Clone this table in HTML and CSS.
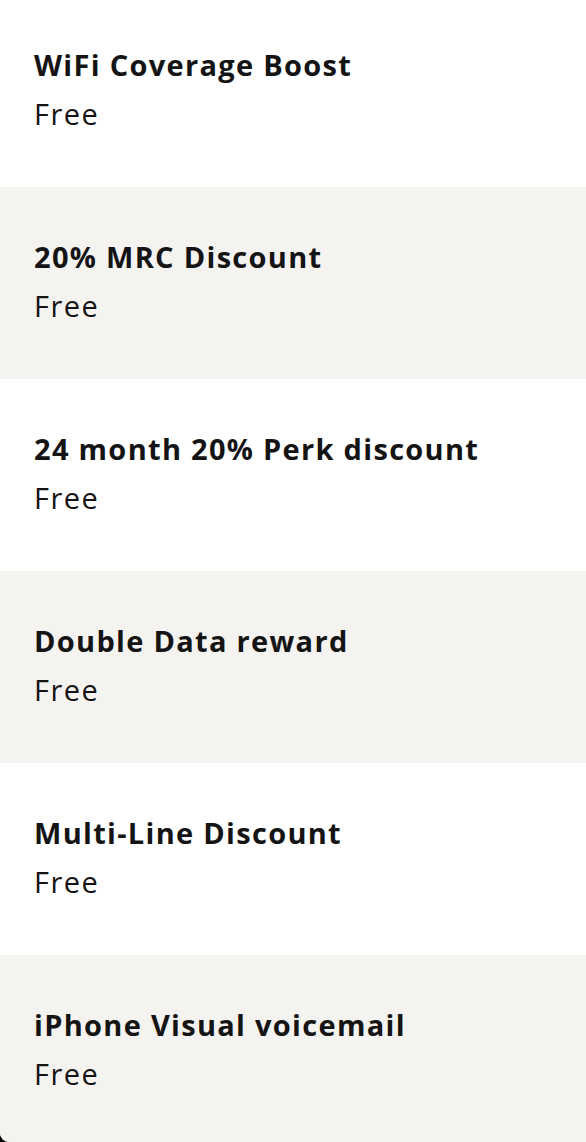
FILE: index.html
```html
<!DOCTYPE html>
<html>
<head>
<meta charset="utf-8">
<link rel="stylesheet" href="styles.css">
</head>
<body>
<div class="panel">
<ul class="list">
  <li class="row"><span class="title">WiFi Coverage Boost</span><span class="price">Free</span></li>
  <li class="row alt"><span class="title">20% MRC Discount</span><span class="price">Free</span></li>
  <li class="row"><span class="title">24 month 20% Perk discount</span><span class="price">Free</span></li>
  <li class="row alt"><span class="title">Double Data reward</span><span class="price">Free</span></li>
  <li class="row"><span class="title">Multi-Line Discount</span><span class="price">Free</span></li>
  <li class="row alt"><span class="title">iPhone Visual voicemail</span><span class="price">Free</span></li>
</ul>
</div>
</body>
</html>
```

FILE: styles.css
```css
html, body {
  margin: 0;
  padding: 0;
  background: #000;
  width: 586px;
  height: 1142px;
  overflow: hidden;
}
.panel {
  width: 586px;
  height: 1142px;
  overflow: hidden;
  border-bottom-left-radius: 9px;
  background: #f4f3f0;
}
.list {
  list-style: none;
  margin: -5px 0 0 0;
  padding: 0;
  font-family: "Open Sans", "DejaVu Sans", sans-serif;
  color: #141414;
}
.row {
  height: 192px;
  box-sizing: border-box;
  padding: 45px 0 0 34px;
  display: flex;
  flex-direction: column;
  align-items: flex-start;
  background: #fff;
}
.row.alt {
  background: #f4f3f0;
}
.title {
  font-size: 29px;
  font-weight: 700;
  line-height: 49px;
  letter-spacing: 1.3px;
}
.price {
  font-size: 29px;
  font-weight: 400;
  line-height: 49px;
  letter-spacing: 1.5px;
}
```
